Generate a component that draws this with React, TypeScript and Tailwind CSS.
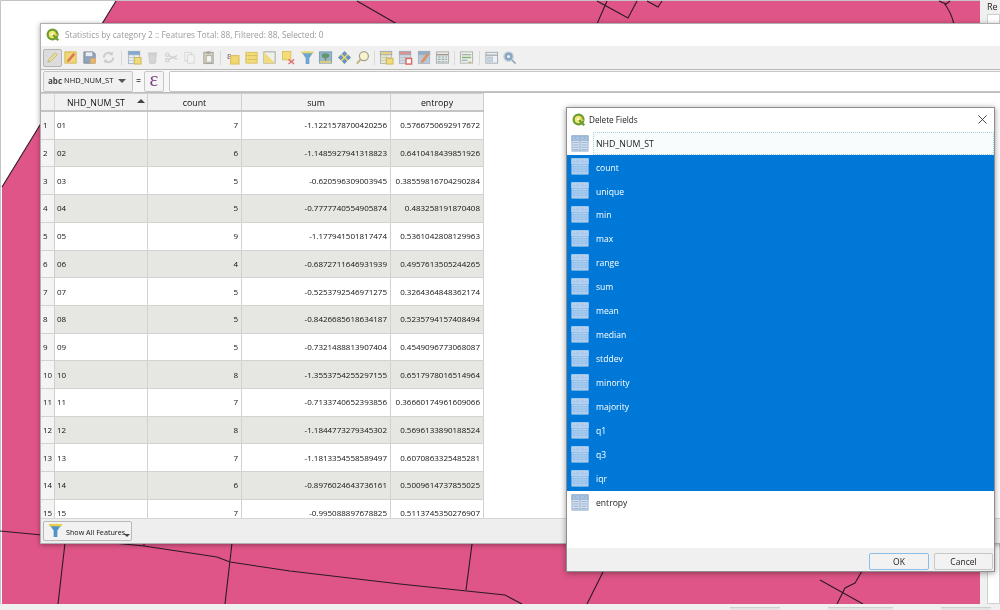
import type { ReactNode } from "react";

const rows = [
  ["01", "7", "-1.1221578700420256", "0.5766750692917672"],
  ["02", "6", "-1.1485927941318823", "0.6410418439851926"],
  ["03", "5", "-0.620596309003945", "0.38559816704290284"],
  ["04", "5", "-0.7777740554905874", "0.483258191870408"],
  ["05", "9", "-1.177941501817474", "0.5361042808129963"],
  ["06", "4", "-0.6872711646931939", "0.4957613505244265"],
  ["07", "5", "-0.5253792546971275", "0.3264364848362174"],
  ["08", "5", "-0.8426685618634187", "0.5235794157408494"],
  ["09", "5", "-0.7321488813907404", "0.4549096773068087"],
  ["10", "8", "-1.3553754255297155", "0.6517978016514964"],
  ["11", "7", "-0.7133740652393856", "0.36660174961609066"],
  ["12", "8", "-1.1844773279345302", "0.5696133890188524"],
  ["13", "7", "-1.1813354558589497", "0.6070863325485281"],
  ["14", "6", "-0.8976024643736161", "0.5009614737855025"],
  ["15", "7", "-0.995088897678825", "0.5113745350276907"],
];

const fields = ["count", "unique", "min", "max", "range", "sum", "mean", "median", "stddev", "minority", "majority", "q1", "q3", "iqr"];

function Ico({ children }: { children: ReactNode }) {
  return (
    <svg viewBox="0 0 16 16" className="w-[15px] h-[15px] opacity-80">
      {children}
    </svg>
  );
}

function Tool({ children, on }: { children: ReactNode; on?: boolean }) {
  return (
    <div className={"w-[18.6px] h-[18px] flex items-center justify-center shrink-0 rounded-[2px] " + (on ? "bg-[#dcdcdc] border border-[#b4b4b4]" : "")}>
      <Ico>{children}</Ico>
    </div>
  );
}

function Sep({ wide }: { wide?: boolean }) {
  return (
    <div className={"flex justify-center shrink-0 " + (wide ? "w-[7.4px]" : "w-[5.6px]")}>
      <div className="w-px h-[14px] bg-[#d8d8d8]" />
    </div>
  );
}

function QgisLogo() {
  return (
    <svg viewBox="0 0 16 16" className="w-[14px] h-[14px] shrink-0">
      <circle cx="7.5" cy="7.5" r="5.6" fill="#f1ea6a" stroke="#6f9c35" strokeWidth="2.6" />
      <circle cx="7.5" cy="7.5" r="1.6" fill="#fff" />
      <path d="M8 8l6 6" stroke="#6f9c35" strokeWidth="2.6" />
      <path d="M10 6l3 3" stroke="#e8c93a" strokeWidth="1.4" />
    </svg>
  );
}

function FieldIcon({ light }: { light?: boolean }) {
  const head = light ? "#a9c9ec" : "#a9c4e4";
  const cell = light ? "#8fbce8" : "#d5e2f1";
  const line = light ? "#c4dcf4" : "#8fa9c9";
  return (
    <svg viewBox="0 0 18 18" className="w-[18px] h-[17px] shrink-0">
      <rect x="0.5" y="1" width="17" height="16" fill={cell} stroke={line} />
      <rect x="0.5" y="1" width="17" height="4.5" fill={head} stroke={line} />
      <path d="M9 5.5V17M2 8h5.5M2 10.5h5.5M2 13h5.5M2 15.5h5.5M10.5 8h5.5M10.5 10.5h5.5M10.5 13h5.5M10.5 15.5h5.5" stroke={line} strokeWidth="0.9" />
      <path d="M3 3h2M8 3h2M13 3h2" stroke={line} strokeWidth="0.9" />
    </svg>
  );
}

function MiniTable({ head, body }: { head: string; body: string }) {
  return (
    <>
      <rect x="1.5" y="1.5" width="12" height="13" fill={body} stroke="#9aa7b5" />
      <rect x="1.5" y="1.5" width="12" height="3.5" fill={head} stroke="#8c9cad" />
      <path d="M7.5 5v9M2 8h11M2 11h11" stroke="#aab3bd" strokeWidth="0.8" />
    </>
  );
}

function Toolbar() {
  return (
    <div className="h-[24px] bg-[#f0f0f0] border-b border-[#b9b9b9] flex items-center pl-[2px]">
      <Tool on>
        <path d="M3 13l1-3 7-7 2 2-7 7z" fill="#f3e48a" stroke="#b7a95a" />
      </Tool>
      <Tool>
        <rect x="2" y="2" width="12" height="12" fill="#f2d24f" stroke="#c9a932" />
        <path d="M4 13l1-3 6-7 2 2-6 7z" fill="#d9573f" />
      </Tool>
      <Tool>
        <path d="M2 2h10l2 2v10H2z" fill="#7d93ad" stroke="#5d6f85" />
        <rect x="4" y="2.5" width="7" height="4" fill="#e8edf2" />
        <rect x="9" y="9" width="5.5" height="5.5" fill="#eda63f" />
      </Tool>
      <Tool>
        <path d="M3 8a5 5 0 0 1 9-3M13 8a5 5 0 0 1-9 3" fill="none" stroke="#c2c2c2" strokeWidth="2" />
        <path d="M12.5 1.5v4h-4zM3.5 14.5v-4h4z" fill="#c2c2c2" />
      </Tool>
      <Sep wide />
      <Tool>
        <MiniTable head="#5e9bd6" body="#e7eef5" />
        <rect x="8" y="8" width="7" height="7" fill="#f1d660" stroke="#c9a932" />
      </Tool>
      <Tool>
        <path d="M4 5h8l-1 9H5z" fill="#cfcfcf" stroke="#bdbdbd" />
        <rect x="3" y="2.5" width="10" height="2" fill="#c8c8c8" />
      </Tool>
      <Tool>
        <circle cx="3.5" cy="5" r="1.8" fill="none" stroke="#c6c6c6" strokeWidth="1.2" />
        <circle cx="3.5" cy="11" r="1.8" fill="none" stroke="#c6c6c6" strokeWidth="1.2" />
        <path d="M5 6l9 4M5 10l9-4" stroke="#c6c6c6" strokeWidth="1.2" />
      </Tool>
      <Tool>
        <rect x="3" y="2.5" width="7" height="9" fill="#f4f4f4" stroke="#cfcfcf" />
        <rect x="6" y="5" width="7" height="9" fill="#f4f4f4" stroke="#cfcfcf" />
      </Tool>
      <Tool>
        <rect x="3" y="2.5" width="10" height="12" fill="#d5c9a6" stroke="#8e8e86" />
        <rect x="6" y="1.5" width="4" height="2.5" fill="#8e8e86" />
        <rect x="5.5" y="6" width="6" height="7" fill="#f6f6f6" stroke="#9a9a9a" />
      </Tool>
      <Sep />
      <Tool>
        <rect x="6" y="6" width="9" height="9" fill="#f2d24f" stroke="#d0ae33" />
        <text x="2" y="9.5" fontSize="11" fill="#5f2a6a" fontFamily="Liberation Serif, serif">ε</text>
      </Tool>
      <Tool>
        <rect x="2" y="2.5" width="12" height="11.5" fill="#f4d75a" stroke="#d7b53b" />
        <path d="M2 6h12M2 10h12" stroke="#a88d2a" strokeWidth="0.9" strokeDasharray="1.3 1" />
      </Tool>
      <Tool>
        <rect x="2" y="2" width="12" height="12" fill="#f0f0ea" stroke="#8f8f8f" />
        <path d="M2 2l12 12H2z" fill="#f2d660" />
      </Tool>
      <Tool>
        <rect x="1.5" y="1.5" width="9" height="9" fill="#f4d75a" stroke="#d7b53b" />
        <path d="M8 10l6 5M14 10l-6 5" stroke="#d9534f" strokeWidth="1.5" />
      </Tool>
      <Tool>
        <path d="M1.5 2h13L10 8.5V15H6V8.5z" fill="#4f94c9" />
        <rect x="1.5" y="1.5" width="13" height="2" fill="#e6d04e" />
      </Tool>
      <Tool>
        <rect x="1.5" y="2" width="13" height="12" fill="#7fa9c4" stroke="#5e88a4" />
        <path d="M8 13V7" stroke="#4d6f3b" strokeWidth="1.5" />
        <ellipse cx="8" cy="6" rx="4" ry="2.5" fill="#3f7f4a" />
        <rect x="2" y="11.5" width="12" height="2.5" fill="#d6c46a" />
      </Tool>
      <Tool>
        <path d="M8 1l7 7-7 7-7-7z" fill="#f0d24a" />
        <rect x="6" y="2" width="4" height="4" fill="#3f7fc0" transform="rotate(45 8 4)" />
        <rect x="6" y="10" width="4" height="4" fill="#3f7fc0" transform="rotate(45 8 12)" />
        <rect x="2" y="6" width="4" height="4" fill="#3f7fc0" transform="rotate(45 4 8)" />
        <rect x="10" y="6" width="4" height="4" fill="#3f7fc0" transform="rotate(45 12 8)" />
      </Tool>
      <Tool>
        <circle cx="9.5" cy="6.5" r="4.8" fill="#fbf4c4" stroke="#8e8e7c" strokeWidth="1.3" />
        <path d="M6 10l-4 4.5" stroke="#b8a24a" strokeWidth="2" />
      </Tool>
      <Sep />
      <Tool>
        <MiniTable head="#e2c964" body="#f0e6b4" />
        <rect x="8" y="9" width="7" height="6" fill="#f1d660" stroke="#c9a932" />
      </Tool>
      <Tool>
        <MiniTable head="#dd7777" body="#c9d4e0" />
        <rect x="8.5" y="9" width="6" height="6" fill="#fff" stroke="#d9443f" strokeWidth="1.5" />
      </Tool>
      <Tool>
        <MiniTable head="#7c9cc4" body="#a9c1dd" />
        <path d="M4 14l1-3 6-8 2 2-6 8z" fill="#dd7a3d" />
      </Tool>
      <Tool>
        <rect x="1.5" y="2" width="13" height="12" fill="#ede6da" stroke="#9a9a9a" />
        <path d="M2 5h12" stroke="#7f7f7f" strokeWidth="1.4" />
        <path d="M3 7.5h3M7 7.5h3M11 7.5h2M3 10h3M7 10h3M11 10h2M3 12.5h3M7 12.5h3M11 12.5h2" stroke="#6c9fb6" strokeWidth="1.2" />
      </Tool>
      <Sep />
      <Tool>
        <rect x="1.5" y="2" width="13" height="12" fill="#edf2e8" stroke="#9aa59a" />
        <path d="M3 5h10" stroke="#8c9a8c" strokeWidth="1.3" />
        <path d="M3 8h10" stroke="#67a565" strokeWidth="1.6" />
        <path d="M3 11h6" stroke="#8aa3b6" strokeWidth="1.4" />
        <path d="M10 13h3" stroke="#cc9966" strokeWidth="1.4" />
      </Tool>
      <Sep />
      <Tool>
        <rect x="2" y="2.5" width="12.5" height="11.5" fill="#eef1f4" stroke="#8e98a3" />
        <path d="M2 5.5h12.5" stroke="#8e98a3" strokeWidth="1.4" />
        <rect x="4" y="7.5" width="5" height="4.5" fill="#b9cfe3" stroke="#8ea7bf" strokeWidth="0.7" />
      </Tool>
      <Tool>
        <circle cx="7" cy="7" r="5" fill="#6d92b8" stroke="#c2ccd6" strokeWidth="1.4" />
        <circle cx="7" cy="7" r="1.8" fill="#e4ecf4" />
        <path d="M10.5 10.5l4 4" stroke="#8f9aa6" strokeWidth="2" />
      </Tool>
    </div>
  );
}

function MapBackdrop() {
  return (
    <svg viewBox="0 0 980 604" className="w-[980px] h-[604px] shrink-0 block">
      <rect width="980" height="604" fill="#fff" />
      <path d="M116 1H980V604H2V187z" fill="#df5587" />
      <path d="M0.5 604V0.5H980" fill="none" stroke="#c4c4c4" />
      <g fill="none" stroke="#2c1a26" strokeWidth="1.1">
        <path d="M116 1L2 187" />
        <path d="M357 1L397 24" />
        <path d="M597 24L607 1M597 1L628 18L637 1" />
        <path d="M647 1L658 7L662 1" />
        <path d="M939 1L946 4L950 1M944 3Q951 12 954 24" />
        <path d="M0 531L42 535" />
        <path d="M65 543L58 604" />
        <path d="M113 543L144 546L217 557L230 562L290 571L400 584L505 595L522 604" />
        <path d="M144 543V546" />
        <path d="M232 543L225 604" />
        <path d="M472 544L466 590" />
        <path d="M603 572L587 604" />
        <path d="M862 571L855 583L845 588L837 604" />
        <path d="M820 580L863 604" />
      </g>
    </svg>
  );
}

function AttributeWindow() {
  const cols = "grid grid-cols-[14px_93px_94px_149px_93px] w-[443px]";
  return (
    <div className="absolute left-[40px] top-[23px] w-[980px] h-[521px] bg-white border border-[#b0b0b0] shadow-[0_1px_5px_rgba(0,0,0,0.35)] flex flex-col text-[8px] text-[#111]">
      <div className="h-[22px] flex items-center pl-[5px] gap-[5px] bg-white shrink-0">
        <QgisLogo />
        <span className="text-[#9a9a9a] text-[8.3px]">Statistics by category 2 :: Features Total: 88, Filtered: 88, Selected: 0</span>
      </div>
      <Toolbar />
      <div className="h-[23px] shrink-0 bg-[#f7f7f7] flex items-center pl-[2px] border-b border-[#bcbcbc]">
        <div className="w-[90px] h-[21px] bg-[#f0f0f0] border border-[#c6c6c6] rounded-[2px] flex items-center pl-[4px]">
          <span className="font-bold text-[#444] mr-[2px]">abc</span>
          <span className="text-[7.5px]">NHD_NUM_ST</span>
          <div className="ml-[5px] w-0 h-0 border-x-[4px] border-x-transparent border-t-[4px] border-t-[#555]" />
        </div>
        <span className="w-[11px] text-center font-bold text-[#555]">=</span>
        <div className="w-[20px] h-[21px] bg-[#f5f5f5] border border-[#c6c6c6] rounded-[2px] flex items-center justify-center text-[21px] leading-none pb-[3px] text-[#7d3f86] [font-family:'Liberation_Serif',serif]">ε</div>
        <div className="ml-[5px] flex-1 h-[21px] bg-white border border-[#c6c6c6] rounded-[2px]" />
      </div>
      <div className="flex-1 min-h-0 overflow-hidden bg-white">
        <div className={cols + " h-[19px] bg-[#f1f1f1] border-t border-[#cfcfcf] border-b-2 border-b-[#c4c4c4] text-center text-[8.8px]"}>
          <div className="border-r border-[#d6d6d6]" />
          <div className="border-r border-[#cfcfcf] relative flex items-center pl-[12px] pt-[3px]">
            NHD_NUM_ST
            <div className="absolute right-[2px] top-[5px] w-0 h-0 border-x-[4px] border-x-transparent border-b-[4px] border-b-[#444]" />
          </div>
          <div className="border-r border-[#cfcfcf] flex items-center justify-center pt-[3px]">count</div>
          <div className="border-r border-[#cfcfcf] flex items-center justify-center pt-[3px]">sum</div>
          <div className="border-r border-[#cfcfcf] flex items-center justify-center pt-[3px]">entropy</div>
        </div>
        {rows.map((r, i) => (
          <div key={r[0]} className={cols + " h-[27.71px] border-b border-[#d2d2ce] " + (i % 2 ? "bg-[#e6e6e2]" : "bg-white")}>
            <div className="bg-[#f4f4f4] border-r border-[#cfcfcf] flex items-center pl-[2px]">{i + 1}</div>
            <div className="border-r border-[#d2d2ce] flex items-center pl-[2px]">{r[0]}</div>
            <div className="border-r border-[#d2d2ce] flex items-center justify-end pr-[3px]">{r[1]}</div>
            <div className="border-r border-[#d2d2ce] flex items-center justify-end pr-[3px]">{r[2]}</div>
            <div className="border-r border-[#d2d2ce] flex items-center justify-end pr-[3px]">{r[3]}</div>
          </div>
        ))}
      </div>
      <div className="h-[25px] shrink-0 bg-[#eeeeee] border-t border-[#d6d6d6] flex items-center pl-[2px]">
        <div className="w-[89px] h-[20px] bg-[#f2f2f2] border border-[#b9b9b9] rounded-[2px] flex items-center pl-[4px] gap-[3px] relative text-[7.2px]">
          <svg viewBox="0 0 16 16" className="w-[15px] h-[15px] shrink-0 mb-[2px]">
            <path d="M1 1h14L10 8v7H6V8z" fill="#4f94c9" />
            <rect x="1" y="1" width="14" height="2.5" fill="#e6d04e" />
          </svg>
          <span className="pt-[2px]">Show All Features</span>
          <div className="absolute right-[1px] bottom-[3px] w-0 h-0 border-x-[3px] border-x-transparent border-t-[3px] border-t-[#444]" />
        </div>
      </div>
    </div>
  );
}

function FieldRow({ label, on }: { label: string; on?: boolean }) {
  return (
    <div className={"h-[23.97px] flex items-center pl-[4px] gap-[7px] text-[8.6px] " + (on ? "bg-[#0078d7] text-white" : "text-[#222]")}>
      <FieldIcon light={on} />
      <span className="pt-[2px]">{label}</span>
    </div>
  );
}

function DeleteFieldsDialog() {
  return (
    <div className="absolute left-[566px] top-[107px] w-[429px] h-[465px] bg-white border border-[#8f8f8f] shadow-[0_1px_6px_rgba(0,0,0,0.4)] flex flex-col text-[#222]">
      <div className="h-[24px] shrink-0 flex items-center pl-[5px] gap-[3px] relative text-[8.2px]">
        <QgisLogo />
        <span>Delete Fields</span>
        <svg viewBox="0 0 10 10" className="absolute right-[7px] top-[7px] w-[9px] h-[9px]">
          <path d="M0.5 0.5l9 9M9.5 0.5l-9 9" stroke="#333" strokeWidth="1" />
        </svg>
      </div>
      <div className="h-[23px] shrink-0 flex items-center pl-[4px] text-[8.8px]">
        <FieldIcon />
        <span className="ml-[4px] flex-1 h-full flex items-center pl-[2px] pt-[2px] border border-dotted border-[#a8cfe0] bg-[#f9fcfd]">NHD_NUM_ST</span>
      </div>
      <div className="flex flex-col">
        {fields.map((f) => (
          <FieldRow key={f} label={f} on />
        ))}
      </div>
      <FieldRow label="entropy" />
      <div className="flex-1" />
      <div className="h-[23px] shrink-0 bg-[#f0f0f0] flex items-center justify-end gap-[5px] pr-[1px] pt-[3px] text-[8.5px]">
        <div className="w-[60px] h-[17px] bg-[#f2f2f2] border-[1.5px] border-[#8fbdea] rounded-[2px] flex items-center justify-center pt-[2px]">OK</div>
        <div className="w-[59px] h-[17px] bg-[#f2f2f2] border border-[#c8c8c8] rounded-[2px] flex items-center justify-center pt-[2px]">Cancel</div>
      </div>
    </div>
  );
}

export default function App() {
  return (
    <div className="relative w-[1000px] h-[610px] overflow-hidden bg-[#f0f0f0] [font-family:'Open_Sans',sans-serif] blur-[0.3px]">
      <div className="flex h-[604px]">
        <MapBackdrop />
        <div className="flex-1 pl-[7px] flex flex-col">
          <div className="h-[14px] text-[9px] leading-[14px] text-[#222] overflow-hidden">Re</div>
          <div className="flex-1 bg-white border border-[#d0d0d0]" />
        </div>
      </div>
      <div className="h-[6px] flex items-end gap-[48px] pl-[730px]">
        <div className="w-[50px] h-[3px] bg-[#e4e4e4] border-t border-[#cfcfcf]" />
        <div className="w-[65px] h-[3px] bg-[#e4e4e4] border-t border-[#cfcfcf]" />
        <div className="w-[50px] h-[3px] bg-[#e4e4e4] border-t border-[#cfcfcf]" />
      </div>
      <AttributeWindow />
      <DeleteFieldsDialog />
    </div>
  );
}
